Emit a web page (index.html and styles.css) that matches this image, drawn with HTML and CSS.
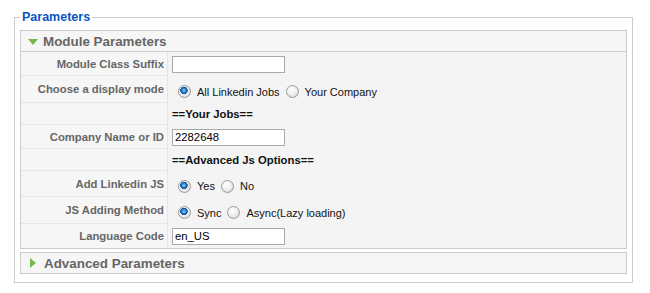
FILE: index.html
```html
<!DOCTYPE html>
<html>
<head>
<meta charset="utf-8">
<link rel="stylesheet" href="styles.css">
</head>
<body>
<fieldset class="params">
  <legend class="params-legend">Parameters</legend>
  <div class="panel">
    <div class="panel-head"><span class="tri-down"></span>Module Parameters</div>
    <div class="panel-body">
      <div class="row h24"><div class="key">Module Class Suffix</div><div class="val"><input class="txt" type="text" value=""></div></div>
      <div class="row h27"><div class="key">Choose a display mode</div><div class="val"><label class="opt"><input class="radio" type="radio" name="mode" checked>All Linkedin Jobs</label><label class="opt"><input class="radio" type="radio" name="mode">Your Company</label></div></div>
      <div class="row h22"><div class="key"></div><div class="val"><b class="note">==Your Jobs==</b></div></div>
      <div class="row h24"><div class="key">Company Name or ID</div><div class="val"><input class="txt" type="text" value="2282648"></div></div>
      <div class="row h22"><div class="key"></div><div class="val"><b class="note">==Advanced Js Options==</b></div></div>
      <div class="row h26"><div class="key">Add Linkedin JS</div><div class="val"><label class="opt"><input class="radio" type="radio" name="addjs" checked>Yes</label><label class="opt"><input class="radio" type="radio" name="addjs">No</label></div></div>
      <div class="row h27"><div class="key">JS Adding Method</div><div class="val"><label class="opt"><input class="radio" type="radio" name="method" checked>Sync</label><label class="opt"><input class="radio" type="radio" name="method">Async(Lazy loading)</label></div></div>
      <div class="row h25 last"><div class="key">Language Code</div><div class="val"><input class="txt" type="text" value="en_US"></div></div>
    </div>
  </div>
  <div class="panel panel-closed">
    <div class="panel-head"><span class="tri-right"></span>Advanced Parameters</div>
  </div>
</fieldset>
</body>
</html>
```
FILE: styles.css
```css
html, body {
  margin: 0;
  padding: 0;
  background: #fff;
  font-family: "Liberation Sans", Arial, sans-serif;
  font-size: 11px;
  color: #333;
}
body {
  padding: 10px 0 0 14px;
}
.params {
  width: 607px;
  margin: 0;
  padding: 6px 5px 8px 5px;
  border: 1px solid #ccc;
}
.params-legend {
  padding: 0 2px 0 2px;
  margin-left: 0;
  color: #0b55c4;
  font-weight: bold;
  font-size: 12.5px;
  line-height: 14px;
}
.panel {
  border: 1px solid #ccc;
  background: #f6f6f6;
}
.panel-closed {
  margin-top: 3px;
}
.panel-head {
  height: 20px;
  display: flex;
  align-items: center;
  padding-left: 8px;
  font-size: 13.4px;
  font-weight: bold;
  color: #666;
  border-bottom: 1px solid #ccc;
}
.panel-closed .panel-head {
  border-bottom: 0;
}
.tri-down {
  width: 0;
  height: 0;
  border-left: 5px solid transparent;
  border-right: 5px solid transparent;
  border-top: 6px solid #77b94f;
  margin-right: 5px;
  margin-left: -1px;
  margin-top: 1px;
}
.tri-right {
  width: 0;
  height: 0;
  border-top: 5px solid transparent;
  border-bottom: 5px solid transparent;
  border-left: 6px solid #77b94f;
  margin-right: 8px;
  margin-left: 1px;
}
.panel-body {
  display: grid;
  grid-template-columns: 147px 1fr;
}
.row {
  display: contents;
}
.key {
  display: flex;
  align-items: center;
  justify-content: flex-end;
  padding-right: 3px;
  font-weight: bold;
  color: #666;
  font-size: 11.3px;
  border-right: 1px solid #e6e6e6;
  border-bottom: 1px solid #e6e6e6;
  background: #f6f6f6;
}
.row.last .key {
  border-bottom: 0;
}
.val {
  display: flex;
  align-items: center;
  padding-left: 4px;
  background: #f4f4f4;
}
.h22 .key { height: 21px; }
.h24 .key { height: 23px; }
.h25 .key { height: 24px; }
.h26 .key { height: 25px; }
.h27 .key { height: 26px; }
.h27 .val, .h26 .val { padding-top: 4px; }
.txt {
  box-sizing: border-box;
  width: 113px;
  height: 17px;
  margin: 0;
  padding: 0 2px;
  border: 1px solid #aaa;
  background: #fff;
  font-family: "Liberation Sans", Arial, sans-serif;
  font-size: 11.3px;
  color: #000;
  outline: none;
}
.note {
  font-weight: bold;
  color: #111;
  font-size: 11.3px;
}
.opt {
  display: flex;
  align-items: center;
  font-size: 11px;
  color: #111;
  margin-right: 0;
}
.radio {
  appearance: none;
  -webkit-appearance: none;
  width: 13px;
  height: 13px;
  margin: 0 6px 0 6px;
  border: 1px solid #9a9a9a;
  border-radius: 50%;
  background: radial-gradient(circle at 40% 35%, #fff 0%, #f0f0f0 45%, #cfcfcf 100%);
  box-sizing: border-box;
}
.radio:checked {
  background:
    radial-gradient(circle at 45% 40%, #8fd0ff 0px, #2a86d0 2px, #0d4f8f 3.5px, rgba(0,0,0,0) 4px),
    radial-gradient(circle at 40% 35%, #fff 0%, #f0f0f0 45%, #cfcfcf 100%);
}
```
